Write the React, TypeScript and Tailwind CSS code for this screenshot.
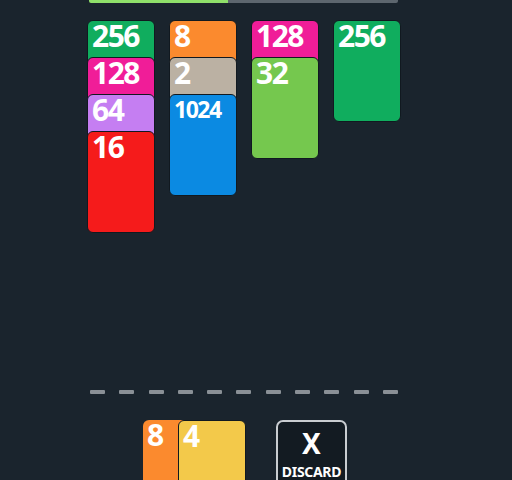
import React from 'react'

type Tile = { value: number; color: string }

const columns: Tile[][] = [
  [
    { value: 256, color: 'bg-[#10ad5e]' },
    { value: 128, color: 'bg-[#f01d98]' },
    { value: 64, color: 'bg-[#c57ef2]' },
    { value: 16, color: 'bg-[#f51b1b]' },
  ],
  [
    { value: 8, color: 'bg-[#fb8a2e]' },
    { value: 2, color: 'bg-[#bbb1a3]' },
    { value: 1024, color: 'bg-[#0b8ae2]' },
  ],
  [
    { value: 128, color: 'bg-[#f01d98]' },
    { value: 32, color: 'bg-[#75c84e]' },
  ],
  [{ value: 256, color: 'bg-[#10ad5e]' }],
]

function Card({ tile, first, className = '' }: { tile: Tile; first?: boolean; className?: string }) {
  const small = tile.value >= 1000
  return (
    <div
      className={`relative w-[68px] h-[102px] shrink-0 rounded-[6px] border border-[#111920] ${tile.color} ${
        first ? '' : '-mt-[65px]'
      } ${className}`}
    >
      <span
        className={`absolute left-[4px] font-bold text-white leading-none ${
          small ? 'top-[3px] text-[23px] tracking-[-1.5px]' : 'top-[0px] text-[30px] tracking-[-1.5px]'
        }`}
      >
        {tile.value}
      </span>
    </div>
  )
}

export default function App() {
  return (
    <div
      className="w-[512px] h-[480px] overflow-hidden bg-[#1a242d]"
      style={{ fontFamily: '"Noto Sans", "Open Sans", sans-serif' }}
    >
      <div className="ml-[89px] w-[309px] h-[3px] flex rounded-b-[2px] overflow-hidden">
        <div className="w-[139px] bg-[#8fe06a]" />
        <div className="flex-1 bg-[#5d666e]" />
      </div>

      <div className="ml-[87px] mt-[17px] h-[367px] flex gap-[14px] items-start">
        {columns.map((col, i) => (
          <div key={i} className="flex flex-col">
            {col.map((t, j) => (
              <Card key={j} tile={t} first={j === 0} />
            ))}
          </div>
        ))}
      </div>

      <div className="ml-[90px] mt-[3px] w-[308px] flex justify-between">
        {Array.from({ length: 11 }).map((_, i) => (
          <div key={i} className="w-[15px] h-[4px] rounded-[1px] bg-[#8a9096]" />
        ))}
      </div>

      <div className="mt-[26px] ml-[143px] flex items-start">
        <Card tile={{ value: 8, color: 'bg-[#fb8a2e]' }} first className="border-0" />
        <Card tile={{ value: 4, color: 'bg-[#f3c94a]' }} first className="-ml-[33px]" />
        <div className="ml-[30px] w-[71px] h-[70px] rounded-[7px] border-2 border-[#c9cdd1] bg-[#131b22] flex flex-col items-center">
          <span className="mt-[7px] text-[28px] font-bold text-white leading-none">X</span>
          <span className="mt-[8px] text-[14px] font-bold text-white leading-none tracking-[-0.3px]">DISCARD</span>
        </div>
      </div>
    </div>
  )
}
